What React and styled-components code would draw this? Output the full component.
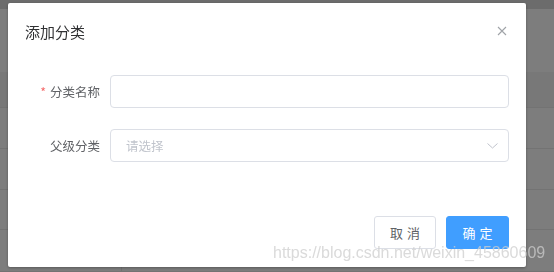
import React from "react";
import styled, { createGlobalStyle } from "styled-components";

const GlobalStyle = createGlobalStyle`
  html, body {
    margin: 0;
    padding: 0;
    overflow: hidden;
  }
  body {
    font-family: "Noto Sans CJK SC", "Liberation Sans", sans-serif;
  }
`;

const Page = styled.div`
  width: 554px;
  height: 272px;
  background: #fafafa;
  display: flex;
  flex-direction: column;
`;

const TopBar = styled.div`
  height: 9px;
  background: #d8d8d8;
`;

const Toolbar = styled.div`
  height: 63px;
`;

const TableHead = styled.div`
  height: 35px;
  background: #f0f0f0;
  border-bottom: 1px solid #e6e6e6;
`;

const TableRow = styled.div`
  height: ${(p) => p.h}px;
  border-bottom: 1px solid #e6e6e6;
  display: grid;
  grid-template-columns: 122px 1fr;
`;

const Cell = styled.div`
  border-right: 1px solid #e6e6e6;
`;

const Mask = styled.div`
  position: fixed;
  inset: 0;
  background: rgba(0, 0, 0, 0.5);
  padding: 3px 0 0 8px;
`;

const Dialog = styled.div`
  width: 518px;
  background: #fff;
  border-radius: 2px;
  box-shadow: 0 1px 3px rgba(0, 0, 0, 0.3);
  display: flex;
  flex-direction: column;
`;

const Header = styled.div`
  display: flex;
  justify-content: space-between;
  align-items: flex-start;
  padding: 17px 19px 8px 17px;
`;

const Title = styled.span`
  font-size: 15px;
  line-height: 24px;
  color: #303133;
`;

const Close = styled.button`
  border: 0;
  background: none;
  padding: 0;
  margin-top: 6px;
  width: 10px;
  height: 10px;
  display: flex;
  cursor: pointer;
`;

const Body = styled.div`
  padding: 23px 17px 25px;
  display: flex;
  flex-direction: column;
  gap: 21px;
  margin-bottom: 21px;
`;

const FormItem = styled.div`
  display: flex;
  align-items: center;
`;

const Label = styled.label`
  width: 75px;
  padding-right: 10px;
  text-align: right;
  font-size: 12.5px;
  color: #606266;
  white-space: nowrap;
`;

const Star = styled.span`
  color: #f56c6c;
  margin-right: 4px;
`;

const Field = styled.div`
  flex: 1;
  height: 33px;
  box-sizing: border-box;
  border: 1px solid #dcdfe6;
  border-radius: 4px;
  display: flex;
  align-items: center;
  justify-content: space-between;
  padding: 0 10px 0 13px;
`;

const Input = styled.input`
  border: 0;
  outline: none;
  flex: 1;
  font-size: 12.5px;
  font-family: inherit;
  color: #606266;
  background: transparent;
  &::placeholder {
    color: #c0c4cc;
  }
`;

const Footer = styled.div`
  display: flex;
  justify-content: flex-end;
  gap: 10px;
  padding: 8px 17px 18px;
`;

const Button = styled.button`
  height: 33px;
  width: ${(p) => (p.primary ? 63 : 62)}px;
  box-sizing: border-box;
  border-radius: 3px;
  border: 1px solid ${(p) => (p.primary ? "#409eff" : "#dcdfe6")};
  background: ${(p) => (p.primary ? "#409eff" : "#fff")};
  color: ${(p) => (p.primary ? "#fff" : "#606266")};
  font-size: 13px;
  font-family: inherit;
  letter-spacing: 4px;
  padding: 0 0 0 4px;
  cursor: pointer;
`;

const Watermark = styled.div`
  position: fixed;
  left: 273px;
  top: 243px;
  font-family: "Liberation Sans", Arial, sans-serif;
  font-size: 16px;
  line-height: 20px;
  color: rgba(205, 205, 205, 0.75);
  pointer-events: none;
  white-space: nowrap;
`;

function App() {
  return (
    <>
      <GlobalStyle />
      <Page>
        <TopBar />
        <Toolbar />
        <TableHead />
        {[40, 40, 39, 41].map((h, i) => (
          <TableRow key={"row" + i} h={h}>
            <Cell />
            <div />
          </TableRow>
        ))}
      </Page>
      <Mask>
        <Dialog>
          <Header>
            <Title>添加分类</Title>
            <Close aria-label="close">
              <svg width="10" height="10" viewBox="0 0 10 10">
                <path d="M1 1 L9 9 M9 1 L1 9" stroke="#a0a3a8" strokeWidth="1.1" fill="none" />
              </svg>
            </Close>
          </Header>
          <Body>
            <FormItem>
              <Label>
                <Star>*</Star>分类名称
              </Label>
              <Field>
                <Input />
              </Field>
            </FormItem>
            <FormItem>
              <Label>父级分类</Label>
              <Field>
                <Input placeholder="请选择" readOnly />
                <svg width="11" height="6" viewBox="0 0 11 6">
                  <path d="M0.5 0.5 L5.5 5 L10.5 0.5" stroke="#c0c4cc" strokeWidth="1" fill="none" />
                </svg>
              </Field>
            </FormItem>
          </Body>
          <Footer>
            <Button>取消</Button>
            <Button primary>确定</Button>
          </Footer>
        </Dialog>
      </Mask>
      <Watermark>https://blog.csdn.net/weixin_45860609</Watermark>
    </>
  );
}

export default App;
